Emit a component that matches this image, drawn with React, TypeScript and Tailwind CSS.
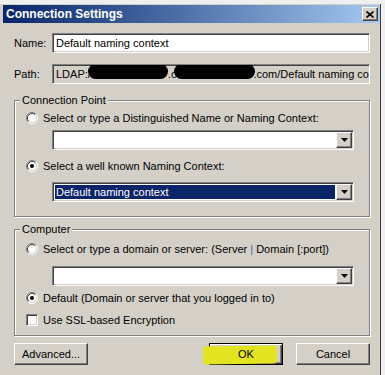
import React from 'react'

const sunken =
  'border border-[#808080] border-b-white border-r-white shadow-[inset_1px_1px_0_#404040,inset_-1px_-1px_0_#d4d0c8]'
const raised =
  'border border-white border-b-[#404040] border-r-[#404040] shadow-[inset_-1px_-1px_0_#808080,inset_1px_1px_0_#d4d0c8] bg-[#d4d0c8]'

function Radio({ checked }: { checked?: boolean }) {
  return (
    <svg width="12" height="12" viewBox="0 0 12 12" className="shrink-0">
      <circle cx="6" cy="6" r="5" fill="#fff" />
      <path d="M2.11 9.89A5.5 5.5 0 0 1 9.89 2.11" fill="none" stroke="#808080" />
      <path d="M9.89 2.11A5.5 5.5 0 0 1 2.11 9.89" fill="none" stroke="#fff" />
      <path d="M2.82 9.18A4.5 4.5 0 0 1 9.18 2.82" fill="none" stroke="#404040" />
      <path d="M9.18 2.82A4.5 4.5 0 0 1 2.82 9.18" fill="none" stroke="#d4d0c8" />
      {checked && <circle cx="6" cy="6" r="2" fill="#000" />}
    </svg>
  )
}

function Combo({ value, selected }: { value?: string; selected?: boolean }) {
  return (
    <div className={`ml-[37px] flex h-[20px] w-[302px] bg-white p-[1px] ${sunken}`}>
      <div className="flex flex-1 p-[1px]">
        {value && (
          <div
            className={`flex flex-1 items-center pl-[1px] ${selected ? 'bg-[#0a246a] text-white' : ''}`}
          >
            {value}
          </div>
        )}
      </div>
      <div className={`flex h-[16px] w-[16px] items-center justify-center ${raised}`}>
        <svg width="7" height="4" viewBox="0 0 7 4">
          <polygon points="0,0 7,0 3.5,4" fill="#000" />
        </svg>
      </div>
    </div>
  )
}

function Option({ label, checked }: { label: React.ReactNode; checked?: boolean }) {
  return (
    <div className="flex h-[14px] items-center gap-[5px] pl-[11px]">
      <Radio checked={checked} />
      <span>{label}</span>
    </div>
  )
}

function Group({ title, className, children }: { title: string; className: string; children: React.ReactNode }) {
  return (
    <div
      className={`relative w-[356px] border border-[#808080] shadow-[inset_1px_1px_0_#fff,1px_1px_0_#fff] ${className}`}
    >
      <span className="absolute left-[5px] top-[-8px] bg-[#d4d0c8] px-[2px] leading-[14px]">{title}</span>
      {children}
    </div>
  )
}

function Blob({ w }: { w: number }) {
  return <span className="inline-block h-[15px] shrink-0 rounded-full bg-black" style={{ width: w }} />
}

export default function App() {
  return (
    <div className="h-[375px] w-[385px] overflow-hidden bg-[#efefef] pt-[4px] font-['Liberation_Sans',Arial,sans-serif] text-[11px] text-black">
      <div className="h-[371px] w-[381px] border-r border-r-[#404040] bg-[#d4d0c8] pl-[3px] pt-[1px]">
        <div className="flex h-[18px] w-[377px] items-center justify-between bg-linear-to-r from-[#0a246a] to-[#a6caf0] pl-[3px] pr-[2px]">
          <span className="text-[12px] font-bold text-white">Connection Settings</span>
          <div className={`flex h-[14px] w-[16px] items-center justify-center ${raised}`}>
            <svg width="8" height="7" viewBox="0 0 8 7">
              <path d="M0.5 0.5L7.5 6.5M7.5 0.5L0.5 6.5" stroke="#000" strokeWidth="1.6" />
            </svg>
          </div>
        </div>

        <div className="pl-[11px]">
          <div className="mt-[10px] flex h-[20px] items-center">
            <span className="w-[38px]">Name:</span>
            <div className={`flex h-[20px] w-[318px] items-center bg-white pl-[3px] ${sunken}`}>
              Default naming context
            </div>
          </div>

          <div className="mt-[11px] flex h-[20px] items-center">
            <span className="w-[38px]">Path:</span>
            <div
              className={`flex h-[20px] w-[318px] items-center overflow-hidden whitespace-nowrap bg-[#d4d0c8] pl-[3px] ${sunken}`}
            >
              <span>LDAP:/</span>
              <span className="-ml-[3px]">
                <Blob w={80} />
              </span>
              <span>.c</span>
              <span className="-ml-[2px]">
                <Blob w={81} />
              </span>
              <span className="-ml-[2px]">.com/Default naming context</span>
            </div>
          </div>

          <Group title="Connection Point" className="mt-[16px] pb-[14px] pt-[10px]">
            <Option label="Select or type a Distinguished Name or Naming Context:" />
            <div className="mt-[5px]">
              <Combo />
            </div>
            <div className="mt-[9px]">
              <Option label="Select a well known Naming Context:" checked />
            </div>
            <div className="mt-[9px]">
              <Combo value="Default naming context" selected />
            </div>
          </Group>

          <Group title="Computer" className="mt-[12px] pb-[8px] pt-[12px]">
            <Option
              label={
                <>
                  Select or type a domain or server: (Server <span className="text-[#3c64b4]">|</span> Domain [:port])
                </>
              }
            />
            <div className="mt-[10px]">
              <Combo />
            </div>
            <div className="mt-[5px]">
              <Option label="Default (Domain or server that you logged in to)" checked />
            </div>
            <div className="mt-[8px] flex h-[14px] items-center gap-[5px] pl-[11px]">
              <div className={`h-[12px] w-[12px] bg-white ${sunken}`} />
              <span>Use SSL-based Encryption</span>
            </div>
          </Group>

          <div className="mt-[7px] flex w-[356px] items-center">
            <button className={`h-[22px] w-[74px] text-[11px] ${raised}`}>Advanced...</button>
            <button className="relative ml-auto h-[22px] w-[74px] border border-black bg-[#d4d0c8] text-[11px] shadow-[inset_1px_1px_0_#fff,inset_-1px_-1px_0_#404040,inset_-2px_-2px_0_#808080]">
              <span className="absolute left-[-7px] top-[2px] h-[18px] w-[74px] -rotate-1 rounded-[3px] bg-[#e2e321]" />
              <span className="relative">OK</span>
            </button>
            <button className={`ml-[13px] h-[22px] w-[74px] text-[11px] ${raised}`}>Cancel</button>
          </div>
        </div>
      </div>
    </div>
  )
}
